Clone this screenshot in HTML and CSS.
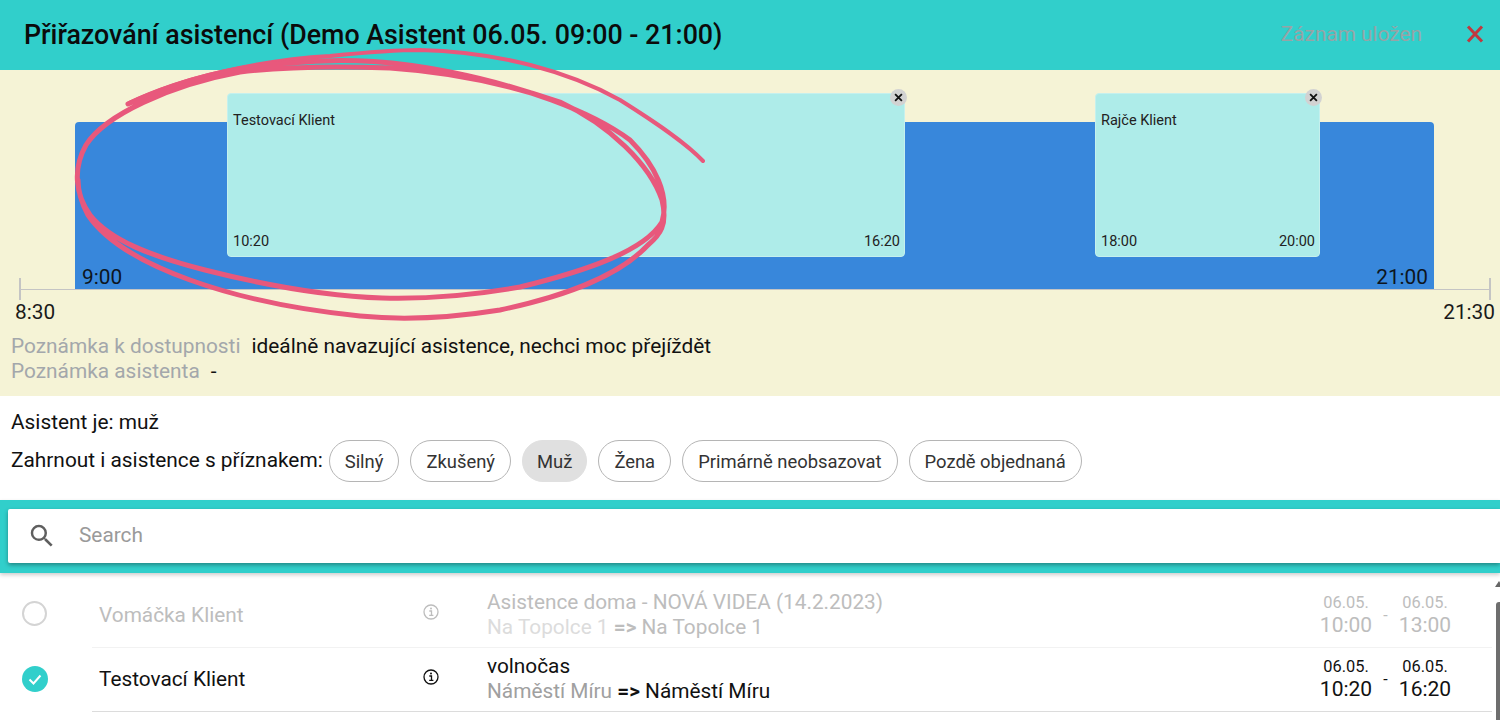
FILE: index.html
```html
<!DOCTYPE html>
<html lang="cs">
<head>
<meta charset="utf-8">
<title>Přiřazování asistencí</title>
<link rel="stylesheet" href="styles.css">
</head>
<body>
<div class="page">
  <header class="topbar">
    <h1 class="title">Přiřazování asistencí (Demo Asistent 06.05. 09:00 - 21:00)</h1>
    <div class="top-actions">
      <span class="saved">Záznam uložen</span>
      <svg class="close" width="18" height="18" viewBox="0 0 18 18"><path d="M2 1.5 16 16.5M16 1.5 2 16.5" fill="none" stroke="#c0393f" stroke-width="3"/></svg>
    </div>
  </header>
  <section class="panel">
    <div class="timeline">
      <div class="axis"></div>
      <div class="tick tick-l"></div>
      <div class="tick tick-r"></div>
      <div class="avail">
        <span class="avail-start">9:00</span>
        <span class="avail-end">21:00</span>
      </div>
      <div class="block block-a">
        <span class="block-name">Testovací Klient</span>
        <div class="block-times"><span>10:20</span><span>16:20</span></div>
        <span class="block-x"><svg width="9" height="9" viewBox="0 0 8 8"><path d="M1 1 7 7M7 1 1 7" stroke="#111" stroke-width="1.6"/></svg></span>
      </div>
      <div class="block block-b">
        <span class="block-name">Rajče Klient</span>
        <div class="block-times"><span>18:00</span><span>20:00</span></div>
        <span class="block-x"><svg width="9" height="9" viewBox="0 0 8 8"><path d="M1 1 7 7M7 1 1 7" stroke="#111" stroke-width="1.6"/></svg></span>
      </div>
      <span class="scale scale-l">8:30</span>
      <span class="scale scale-r">21:30</span>
    </div>
    <div class="notes">
      <div class="note"><span class="note-label">Poznámka k dostupnosti</span><span>ideálně navazující asistence, nechci moc přejíždět</span></div>
      <div class="note"><span class="note-label">Poznámka asistenta</span><span>-</span></div>
    </div>
  </section>
  <section class="filters">
    <div class="gender">Asistent je: muž</div>
    <div class="chips">
      <span class="chips-label">Zahrnout i asistence s příznakem:</span>
      <span class="chip">Silný</span>
      <span class="chip">Zkušený</span>
      <span class="chip chip-on">Muž</span>
      <span class="chip">Žena</span>
      <span class="chip">Primárně neobsazovat</span>
      <span class="chip">Pozdě objednaná</span>
    </div>
  </section>
  <section class="search-band">
    <div class="search">
      <svg class="search-icon" width="30" height="30" viewBox="0 0 24 24"><path fill="#5f5f5f" d="M15.5 14h-.79l-.28-.27A6.47 6.47 0 0 0 16 9.5 6.5 6.5 0 1 0 9.5 16c1.61 0 3.09-.59 4.23-1.57l.27.28v.79l5 4.99L20.49 19l-4.99-5zm-6 0C7.01 14 5 11.99 5 9.5S7.01 5 9.5 5 14 7.01 14 9.5 11.99 14 9.5 14z"/></svg>
      <span class="search-text">Search</span>
    </div>
  </section>
  <section class="list">
    <div class="row row-off">
      <span class="radio"></span>
      <span class="client">Vomáčka Klient</span>
      <svg class="info" width="16" height="16" viewBox="0 0 16 16"><circle cx="8" cy="8" r="7" fill="none" stroke="currentColor" stroke-width="1.3"/><path d="M6.3 7h2.2v4.2M6.2 11.4h4.2" fill="none" stroke="currentColor" stroke-width="1.3"/><circle cx="8" cy="4.6" r="1" fill="currentColor"/></svg>
      <div class="service">
        <div class="service-name">Asistence doma - NOVÁ VIDEA (14.2.2023)</div>
        <div class="route"><span class="route-from">Na Topolce 1</span> <b>=&gt;</b> Na Topolce 1</div>
      </div>
      <div class="times">
        <div class="time"><small>06.05.</small><span>10:00</span></div>
        <i class="dash">-</i>
        <div class="time"><small>06.05.</small><span>13:00</span></div>
      </div>
    </div>
    <div class="row row-on">
      <span class="radio radio-on"><svg width="28" height="28" viewBox="0 0 28 28"><path d="M8.5 14.5 12.5 18.5 19.5 10.5" fill="none" stroke="#fff" stroke-width="2"/></svg></span>
      <span class="client">Testovací Klient</span>
      <svg class="info" width="16" height="16" viewBox="0 0 16 16"><circle cx="8" cy="8" r="7" fill="none" stroke="currentColor" stroke-width="1.3"/><path d="M6.3 7h2.2v4.2M6.2 11.4h4.2" fill="none" stroke="currentColor" stroke-width="1.3"/><circle cx="8" cy="4.6" r="1" fill="currentColor"/></svg>
      <div class="service">
        <div class="service-name">volnočas</div>
        <div class="route"><span class="route-from">Náměstí Míru</span> <b>=&gt;</b> Náměstí Míru</div>
      </div>
      <div class="times">
        <div class="time"><small>06.05.</small><span>10:20</span></div>
        <i class="dash">-</i>
        <div class="time"><small>06.05.</small><span>16:20</span></div>
      </div>
    </div>
    <div class="scroll-arrow"></div>
    <div class="scrollbar"></div>
  </section>
  <svg class="scribble" width="1500" height="720" viewBox="0 0 1500 720">
    <path class="tail" d="M129 103C180 78 260 60 330 56C370 52 400 50 420 50C500 52 570 72 620 100C655 122 685 142 703 161"/>
    <path d="M128 104C180 80 235 66 290 63C350 57 400 62 450 72C520 86 590 110 630 140C655 165 670 195 662 222C645 250 590 270 520 287C470 296 420 299 382 298C320 296 260 284 205 270C150 256 110 240 90 215C76 195 72 170 86 145C105 115 170 85 240 72C290 66 340 66 390 68C450 72 510 85 560 102C610 125 650 165 662 200C668 225 660 235 648 245C620 275 570 295 500 310C450 318 400 320 360 316C300 310 240 298 190 280C140 262 105 240 88 215C80 200 78 190 78 180"/>
  </svg>
</div>
</body>
</html>
```
FILE: styles.css
```css
* { box-sizing: border-box; }
html, body { margin: 0; height: 720px; overflow: hidden; background: #fff; }
body { font-family: Roboto, "Noto Sans", sans-serif; color: #111; }
.page { position: relative; width: 1500px; height: 720px; overflow: hidden; }

.topbar { height: 70px; background: #31cfcb; display: flex; align-items: center; justify-content: space-between; padding: 0 16px 0 24px; }
.title { margin: 0; font-size: 26.8px; font-weight: 500; color: #0b0b0b; }
.top-actions { display: flex; align-items: center; gap: 44px; margin-top: -2px; }
.saved { font-size: 20.8px; color: #97a4a6; }
.close { display: block; }

.panel { height: 326px; background: #f5f3d6; }
.timeline { position: relative; height: 263px; }
.axis { position: absolute; left: 20px; width: 1470px; top: 219px; height: 1px; background: #c4c4c4; }
.tick { position: absolute; top: 208px; width: 2px; height: 22px; background: #c4c4c4; }
.tick-l { left: 19px; }
.tick-r { left: 1489px; }
.avail { position: absolute; left: 75px; top: 52px; width: 1359px; height: 167px; background: #3887db; border-radius: 4px 4px 0 0; }
.avail-start, .avail-end { position: absolute; bottom: 0; font-size: 20.8px; line-height: 24px; color: #0d1520; }
.avail-start { left: 7px; }
.avail-end { right: 6px; }
.block { position: absolute; top: 23px; height: 164px; background: #aeece9; border: 1px solid #c5f0ee; border-radius: 4px; font-size: 14.5px; color: #222; }
.block-a { left: 227px; width: 678px; }
.block-b { left: 1095px; width: 225px; }
.block-name { position: absolute; left: 5px; top: 18px; line-height: 17px; }
.block-times { position: absolute; left: 5px; right: 4px; bottom: 6px; display: flex; justify-content: space-between; line-height: 17px; }
.block-x { position: absolute; right: -3px; top: -5px; width: 17px; height: 17px; border-radius: 50%; background: #d2d2d2; display: flex; align-items: center; justify-content: center; }
.block-x svg { display: block; }
.scale { position: absolute; top: 230px; font-size: 20.8px; line-height: 24px; color: #1a1a1a; }
.scale-l { left: 15px; }
.scale-r { right: 5px; }

.notes { padding: 1px 11px 0; font-size: 20.85px; line-height: 25px; }
.note { display: flex; gap: 11px; color: #111; }
.note-label { color: #a3a7ab; }

.filters { height: 104px; padding: 14px 11px 0; font-size: 20.85px; }
.gender { line-height: 24px; }
.chips { display: flex; align-items: center; gap: 11px; margin-top: 6px; }
.chips-label { margin-right: -5px; margin-top: -3px; }
.chip { height: 42px; padding: 0 15px; border: 1px solid #b5b5b5; border-radius: 21px; display: flex; align-items: center; font-size: 18.4px; color: #333; background: #fff; }
.chip-on { background: #e0e0e0; border-color: #e0e0e0; padding: 0 14px; }

.search-band { height: 73px; background: #31cfcb; padding: 9px 0 10px 8px; box-shadow: 0 2px 4px rgba(0,0,0,.2); position: relative; }
.search { height: 54px; background: #fff; border-radius: 2px 0 0 2px; box-shadow: 0 2px 4px rgba(0,0,0,.35); display: flex; align-items: center; padding-left: 19px; gap: 22px; }
.search-icon { display: block; }
.search-text { font-size: 20.8px; color: #9a9a9a; margin-top: -2px; }

.list { position: relative; padding: 9px 0 0 0; }
.row { margin-left: 92px; margin-right: 8px; position: relative; display: flex; align-items: center; border-bottom: 1px solid #dcdcdc; }
.row-off { height: 66px; color: #bdbdbd; border-bottom-color: #f2f2f2; }
.row-on { height: 64px; color: #111; }
.radio { position: absolute; left: -70px; top: 19px; width: 25px; height: 25px; border-radius: 50%; border: 2px solid #d4d4d4; }
.radio-on { width: 26px; height: 26px; background: #31cfcb; border: 0; top: 18px; }
.radio-on svg { display: block; margin: -1px; }
.client { width: 331px; padding-left: 7px; font-size: 20.8px; }
.row-on .client { margin-top: -1px; }
.info { flex: none; margin-top: -5px; }
.service { width: 829px; margin-left: 48px; font-size: 20.8px; line-height: 25px; }
.row-on .service { margin-top: -1px; }
.route-from { color: #a0a0a0; }
.row-off .route-from { color: #dcdcdc; }
.route b { font-weight: 700; }
.times { display: flex; align-items: center; }
.row-off .times { margin-top: 2px; }
.row-on .times { margin-top: -1px; }
.time { display: flex; flex-direction: column; align-items: center; width: 60px; }
.time small { font-size: 16.4px; line-height: 20px; }
.time span { font-size: 21px; line-height: 25px; }
.dash { font-style: normal; font-size: 16px; width: 19px; text-align: center; }
.scroll-arrow { position: absolute; right: 0; top: 8px; width: 0; height: 0; border-left: 4px solid transparent; border-right: 4px solid transparent; border-bottom: 6px solid #666; transform: translateX(3px); }
.scrollbar { position: absolute; right: 0; top: 29px; width: 4px; height: 130px; background: #6e6e6e; border-radius: 3px 0 0 0; }

.scribble { position: absolute; left: 0; top: 0; pointer-events: none; }
.scribble path { fill: none; stroke: #e8587c; stroke-width: 5; stroke-linecap: round; stroke-linejoin: round; }
.scribble .tail { stroke-width: 4; }
```
